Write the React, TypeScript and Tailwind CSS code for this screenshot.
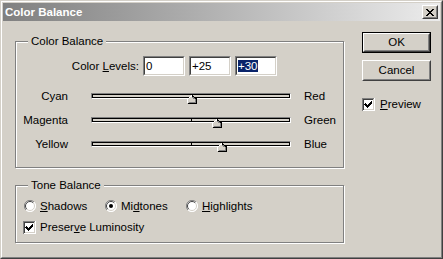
import React from "react";

const face = "bg-[#d4d0c8]";

function Sunken({ className = "", children }: { className?: string; children?: React.ReactNode }) {
  return (
    <div className={`border border-t-[#808080] border-l-[#808080] border-b-white border-r-white ${className}`}>
      <div className="h-full w-full border border-t-[#404040] border-l-[#404040] border-b-[#d4d0c8] border-r-[#d4d0c8] bg-white">
        {children}
      </div>
    </div>
  );
}

function Check({ on = true }: { on?: boolean }) {
  return (
    <svg width="13" height="13" viewBox="0 0 13 13" shapeRendering="crispEdges" className="shrink-0">
      <rect x="0" y="0" width="13" height="13" fill="#ffffff" />
      <path d="M0 12.5V0.5H12.5" stroke="#808080" fill="none" />
      <path d="M1 11.5V1.5H11.5" stroke="#404040" fill="none" />
      <path d="M0.5 12.5H12.5V0" stroke="#ffffff" fill="none" />
      <path d="M1.5 11.5H11.5V1" stroke="#d4d0c8" fill="none" />
      {on && (
        <path
          d="M3 5h1v1h1v1h1v-1h1v-1h1v-1h1v-1h1v3h-1v1h-1v1h-1v1h-1v1h-1v-1h-1v-1h-1v-1h-1z"
          fill="#000000"
        />
      )}
    </svg>
  );
}

function Radio({ on = false }: { on?: boolean }) {
  return (
    <svg width="12" height="12" viewBox="0 0 12 12" className="shrink-0">
      <circle cx="6" cy="6" r="5.5" fill="#ffffff" />
      <path d="M10 2A5.5 5.5 0 0 0 2 10" stroke="#808080" strokeWidth="1" fill="none" />
      <path d="M9.2 2.8A4.5 4.5 0 0 0 2.8 9.2" stroke="#404040" strokeWidth="1" fill="none" />
      <path d="M10 2A5.5 5.5 0 0 1 2 10" stroke="#ffffff" strokeWidth="1" fill="none" />
      <path d="M9.2 2.8A4.5 4.5 0 0 1 2.8 9.2" stroke="#d4d0c8" strokeWidth="1" fill="none" />
      {on && <circle cx="6" cy="6" r="2" fill="#000000" />}
    </svg>
  );
}

function Slider({ left, right, value, tick }: { left: string; right: string; value: number; tick: boolean }) {
  return (
    <div className="flex h-[24px] items-center">
      <div className="w-[52px] text-right">{left}</div>
      <div className="relative ml-[23px] h-[6px] w-[200px] border border-t-[#808080] border-l-[#808080] border-b-white border-r-white">
        <div className="h-full w-full border border-black bg-[#d4d0c8]" />
        {tick && <div className="absolute left-[99px] top-[1px] h-[2px] w-[1px] bg-black" />}
        <svg
          width="10"
          height="9"
          viewBox="0 0 10 9"
          shapeRendering="crispEdges"
          className="absolute top-[1px]"
          style={{ left: 95 + value }}
        >
          <polygon points="5,0.5 9.5,4 9.5,8.5 0.5,8.5 0.5,4" fill="#d4d0c8" />
          <polyline points="0.5,8 0.5,4 5,0.5" stroke="#ffffff" fill="none" />
          <polyline points="5,0.5 9.5,4 9.5,8.5 0.5,8.5" stroke="#000000" fill="none" />
          <polyline points="5,1.8 8.5,4.5 8.5,7.5 1.5,7.5" stroke="#808080" fill="none" />
        </svg>
      </div>
      <div className="ml-[13px]">{right}</div>
    </div>
  );
}

function Group({ title, className = "", children }: { title: string; className?: string; children: React.ReactNode }) {
  return (
    <div
      className={`relative w-[329px] border border-[#808080] shadow-[inset_1px_1px_0_#ffffff,1px_1px_0_#ffffff] ${className}`}
    >
      <span className={`absolute left-[12px] top-[-8px] px-[3px] leading-[14px] ${face}`}>{title}</span>
      {children}
    </div>
  );
}

function Button({ label, def = false }: { label: string; def?: boolean }) {
  return (
    <div className={`h-[21px] w-[69px] ${def ? "border border-black" : ""}`}>
      <div className="flex h-full w-full items-center justify-center border border-t-white border-l-white border-b-[#404040] border-r-[#404040]">
        <div className="flex h-full w-full items-center justify-center border border-transparent border-b-[#808080] border-r-[#808080]">
          {label}
        </div>
      </div>
    </div>
  );
}

export default function App() {
  return (
    <div
      className={`h-[259px] w-[443px] border border-t-[#d4d0c8] border-l-[#d4d0c8] border-b-[#404040] border-r-[#404040] ${face} text-[11.5px] leading-[13px] text-black`}
      style={{ fontFamily: '"Liberation Sans", Arial, sans-serif' }}
    >
      <div className="h-full w-full border border-t-white border-l-white border-b-[#808080] border-r-[#808080] p-[1px]">
        {/* title bar */}
        <div className="flex h-[18px] items-center justify-between bg-gradient-to-r from-[#808080] to-[#ececec] pl-[2px] pr-[2px]">
          <span className="text-[11.5px] font-bold text-white">Color Balance</span>
          <div className="h-[14px] w-[16px] border border-t-white border-l-white border-b-[#404040] border-r-[#404040] bg-[#d4d0c8]">
            <div className="flex h-full w-full items-center justify-center border border-transparent border-b-[#808080] border-r-[#808080]">
              <svg width="8" height="7" viewBox="0 0 8 7" shapeRendering="crispEdges">
                <path
                  d="M0 0h2v1h1v1h2v-1h1v-1h2v1h-1v1h-1v1h-1v1h1v1h1v1h1v1h-2v-1h-1v-1h-2v1h-1v1h-2v-1h1v-1h1v-1h1v-1h-1v-1h-1v-1h-1z"
                  fill="#000000"
                />
              </svg>
            </div>
          </div>
        </div>

        {/* client */}
        <div className="flex">
          <div className="ml-[12px] mt-[20px]">
            <Group title="Color Balance" className="h-[127px]">
              <div className="mt-[14px] flex h-[20px] items-center">
                <div className="w-[123px] text-right">
                  Color <u className="underline-offset-1">L</u>evels:
                </div>
                <div className="ml-[4px] flex gap-[4px]">
                  <Sunken className="h-[20px] w-[42px]">
                    <div className="pl-[1px] pt-[2px]">0</div>
                  </Sunken>
                  <Sunken className="h-[20px] w-[42px]">
                    <div className="pl-[1px] pt-[2px]">+25</div>
                  </Sunken>
                  <Sunken className="h-[20px] w-[42px]">
                    <div className="pl-[1px] pt-[2px]">
                      <span className="bg-[#0a246a] text-white">+30</span>
                    </div>
                  </Sunken>
                </div>
              </div>
              <div className="mt-[8px]">
                <Slider left="Cyan" right="Red" value={0} tick={false} />
                <Slider left="Magenta" right="Green" value={25} tick />
                <Slider left="Yellow" right="Blue" value={30} tick />
              </div>
            </Group>

            <Group title="Tone Balance" className="mt-[17px] h-[58px]">
              <div className="mt-[12px] flex h-[16px] items-center pl-[8px]">
                <div className="flex w-[81px] items-center gap-[4px]">
                  <Radio />
                  <span>
                    <u className="underline-offset-1">S</u>hadows
                  </span>
                </div>
                <div className="flex w-[81px] items-center gap-[4px]">
                  <Radio on />
                  <span>
                    Mi<u className="underline-offset-1">d</u>tones
                  </span>
                </div>
                <div className="flex items-center gap-[4px]">
                  <Radio />
                  <span>
                    <u className="underline-offset-1">H</u>ighlights
                  </span>
                </div>
              </div>
              <div className="mt-[5px] flex h-[16px] items-center gap-[4px] pl-[7px]">
                <Check />
                <span>
                  Preser<u className="underline-offset-1">v</u>e Luminosity
                </span>
              </div>
            </Group>
          </div>

          <div className="ml-[18px] mt-[11px] flex flex-col">
            <Button label="OK" def />
            <div className="mt-[7px]">
              <Button label="Cancel" />
            </div>
            <div className="mt-[17px] flex items-center gap-[5px]">
              <Check />
              <span>
                <u className="underline-offset-1">P</u>review
              </span>
            </div>
          </div>
        </div>
      </div>
    </div>
  );
}
